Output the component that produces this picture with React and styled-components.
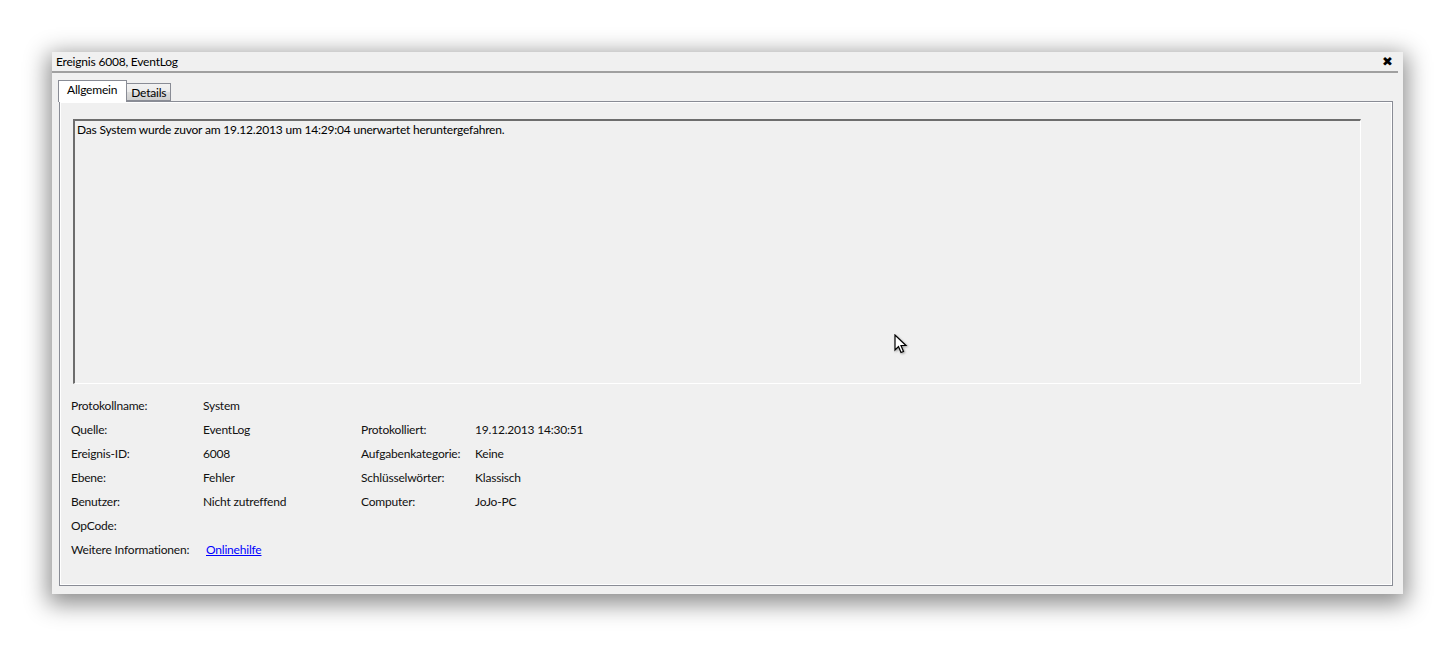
import React from "react";
import styled, { createGlobalStyle } from "styled-components";

const GlobalStyle = createGlobalStyle`
  html, body {
    margin: 0;
    padding: 0;
    background: #ffffff;
  }
  body {
    font-family: Lato, "Noto Sans", "Liberation Sans", sans-serif;
    font-size: 12px;
    letter-spacing: -0.2px;
    color: #111;
  }
`;

const fieldsLeft = [
  ["Protokollname:", "System"],
  ["Quelle:", "EventLog"],
  ["Ereignis-ID:", "6008"],
  ["Ebene:", "Fehler"],
  ["Benutzer:", "Nicht zutreffend"],
  ["OpCode:", ""],
];

const fieldsRight = [
  null,
  ["Protokolliert:", "19.12.2013 14:30:51"],
  ["Aufgabenkategorie:", "Keine"],
  ["Schlüsselwörter:", "Klassisch"],
  ["Computer:", "JoJo-PC"],
  null,
];

export default function App() {
  return (
    <Page>
      <GlobalStyle />
      <Window>
        <TitleBar>
          <span>Ereignis 6008, EventLog</span>
          <CloseBtn>✖</CloseBtn>
        </TitleBar>
        <Divider />
        <Body>
          <TabStrip>
            <Tab active>Allgemein</Tab>
            <Tab>Details</Tab>
          </TabStrip>
          <TabPanel>
            <MessageBox>
              Das System wurde zuvor am 19.12.2013 um 14:29:04 unerwartet
              heruntergefahren.
            </MessageBox>
            <Fields>
              {fieldsLeft.map((left, i) => (
                <React.Fragment key={left[0]}>
                  <Label>{left[0]}</Label>
                  <Value>{left[1]}</Value>
                  <Label>{fieldsRight[i] ? fieldsRight[i][0] : ""}</Label>
                  <Value>{fieldsRight[i] ? fieldsRight[i][1] : ""}</Value>
                </React.Fragment>
              ))}
              <Label>Weitere Informationen:</Label>
              <Value>
                <HelpLink href="#">Onlinehilfe</HelpLink>
              </Value>
            </Fields>
          </TabPanel>
        </Body>
        <Cursor width="14" height="22" viewBox="0 0 14 22">
          <path
            d="M1 1 L1 16 L4.5 12.5 L7 18.5 L9.5 17.5 L7 11.5 L12 11.5 Z"
            fill="#fff"
            stroke="#000"
            strokeWidth="1.2"
            strokeLinejoin="miter"
          />
        </Cursor>
      </Window>
    </Page>
  );
}

const Page = styled.div`
  width: 1455px;
  height: 647px;
  padding: 52px 0 0 52px;
  box-sizing: border-box;
  overflow: hidden;
`;

const Window = styled.div`
  position: relative;
  width: 1351px;
  height: 542px;
  background: #f0f0f0;
  box-shadow: 0 6px 22px 4px rgba(0, 0, 0, 0.45);
  display: flex;
  flex-direction: column;
`;

const TitleBar = styled.div`
  height: 19px;
  display: flex;
  align-items: center;
  justify-content: space-between;
  padding: 0 10px 0 4px;
  color: #000;
`;

const CloseBtn = styled.span`
  font-family: "DejaVu Sans", sans-serif;
  font-size: 13px;
  font-weight: bold;
  color: #000;
  letter-spacing: 0;
`;

const Divider = styled.div`
  height: 2px;
  margin-right: 5px;
  background: #a0a0a0;
`;

const Body = styled.div`
  flex: 1;
  display: flex;
  flex-direction: column;
  padding: 7px 10px 8px 7px;
`;

const TabStrip = styled.div`
  display: flex;
  align-items: flex-end;
  height: 21px;
  position: relative;
  z-index: 1;
  margin-left: -1px;
`;

const Tab = styled.div`
  box-sizing: border-box;
  border: 1px solid #898c95;
  border-bottom: ${(p) => (p.active ? "none" : "1px solid #898c95")};
  border-left: ${(p) => (p.active ? "1px solid #898c95" : "none")};
  background: ${(p) =>
    p.active ? "#ffffff" : "linear-gradient(#f2f2f2, #ebebeb 50%, #dddddd 51%, #cfcfcf)"};
  height: ${(p) => (p.active ? "22px" : "18px")};
  margin-bottom: ${(p) => (p.active ? "-1px" : "0")};
  padding: ${(p) => (p.active ? "1px 9px 0 8px" : "1px 4px 0 4px")};
  display: flex;
  align-items: flex-start;
  color: #000;
`;

const TabPanel = styled.div`
  flex: 1;
  border: 1px solid #898c95;
  box-shadow: inset 1px 1px 0 #fff, inset -1px -1px 0 #fff;
  padding: 17px 31px 0 13px;
  display: flex;
  flex-direction: column;
`;

const MessageBox = styled.div`
  height: 265px;
  box-sizing: border-box;
  border-top: 2px solid #6d6d6d;
  border-left: 2px solid #6d6d6d;
  border-right: 1px solid #ffffff;
  border-bottom: 1px solid #ffffff;
  padding: 1px 2px;
  color: #000;
  line-height: 16px;
`;

const Fields = styled.div`
  display: grid;
  grid-template-columns: 132px 158px 114px auto;
  grid-auto-rows: 24px;
  align-items: center;
  margin-top: 9px;
  margin-left: -2px;
`;

const Label = styled.div`
  color: #111;
  white-space: nowrap;
`;

const Value = styled.div`
  color: #111;
  white-space: nowrap;
`;

const HelpLink = styled.a`
  color: #0000ff;
  text-decoration: underline;
  margin-left: 3px;
`;

const Cursor = styled.svg`
  position: absolute;
  left: 842px;
  top: 282px;
  filter: drop-shadow(1px 1px 1px rgba(0, 0, 0, 0.35));
`;
